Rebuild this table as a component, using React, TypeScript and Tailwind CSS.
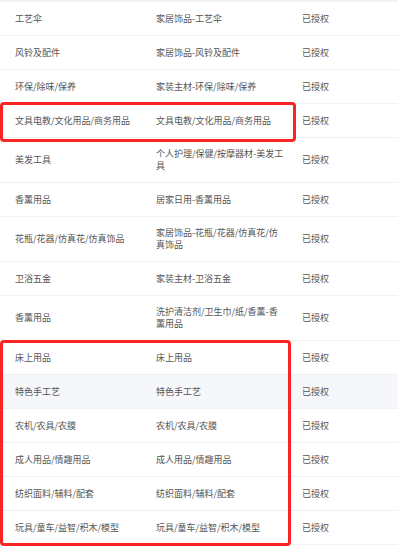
import React from "react";

type Row = { a: string; b: string; hl?: boolean };

const rows: Row[] = [
  { a: "工艺伞", b: "家居饰品-工艺伞" },
  { a: "风铃及配件", b: "家居饰品-风铃及配件" },
  { a: "环保/除味/保养", b: "家装主材-环保/除味/保养" },
  { a: "文具电教/文化用品/商务用品", b: "文具电教/文化用品/商务用品" },
  { a: "美发工具", b: "个人护理/保健/按摩器材-美发工具" },
  { a: "香薰用品", b: "居家日用-香薰用品" },
  { a: "花瓶/花器/仿真花/仿真饰品", b: "家居饰品-花瓶/花器/仿真花/仿真饰品" },
  { a: "卫浴五金", b: "家装主材-卫浴五金" },
  { a: "香薰用品", b: "洗护清洁剂/卫生巾/纸/香薰-香薰用品" },
  { a: "床上用品", b: "床上用品" },
  { a: "特色手工艺", b: "特色手工艺", hl: true },
  { a: "农机/农具/农膜", b: "农机/农具/农膜" },
  { a: "成人用品/情趣用品", b: "成人用品/情趣用品" },
  { a: "纺织面料/辅料/配套", b: "纺织面料/辅料/配套" },
  { a: "玩具/童车/益智/积木/模型", b: "玩具/童车/益智/积木/模型" },
];

export default function App() {
  return (
    <div
      className="relative w-[398px] h-[550px] overflow-hidden bg-white text-[9px] leading-[12px] text-[#555]"
      style={{ fontFamily: '"Noto Sans CJK SC", "Noto Sans", sans-serif' }}
    >
      <div className="h-[2px] bg-[#f3f4f6]" />
      {rows.map((r, i) => (
        <div
          key={i}
          className={`grid grid-cols-[142px_146px_1fr] min-h-[34px] border-b border-[#f0f1f3] ${
            r.hl ? "bg-[#f6f7fb]" : "bg-white"
          }`}
        >
          <div className="flex items-center pl-[15px] pr-[4px] py-[10px] break-all">{r.a}</div>
          <div className="flex items-center pl-[14px] pr-[4px] py-[10px] break-all">{r.b}</div>
          <div className="flex items-center pl-[14px] py-[10px]">已授权</div>
        </div>
      ))}
      <div className="absolute left-[0px] top-[102px] w-[296px] h-[40px] border-[3px] border-[#fb2424] rounded-[4px]" />
      <div className="absolute left-[0px] top-[340px] w-[291px] h-[206px] border-[3px] border-[#fb2424] rounded-[4px]" />
    </div>
  );
}
